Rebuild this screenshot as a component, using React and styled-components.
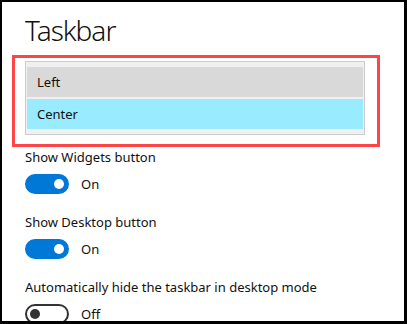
import React from 'react';
import styled, { createGlobalStyle } from 'styled-components';

const GlobalStyle = createGlobalStyle`
  html, body {
    margin: 0;
    padding: 0;
    background: #fff;
  }
  body {
    font-family: "Noto Sans", "Open Sans", sans-serif;
    color: #000;
  }
`;

const Frame = styled.div`
  width: 407px;
  height: 324px;
  box-sizing: border-box;
  border-style: solid;
  border-color: #000;
  border-width: 2px 3px 3px 2px;
  background: #fff;
  overflow: hidden;
`;

const Title = styled.h1`
  margin: 0;
  padding: 9px 0 0 23px;
  height: 53px;
  box-sizing: border-box;
  font-size: 28px;
  font-weight: 300;
  line-height: 38px;
  letter-spacing: -1px;
  color: #111;
`;

const Highlight = styled.div`
  margin-left: 10px;
  width: 368px;
  height: 92px;
  box-sizing: border-box;
  border: 3px solid #ff4447;
  padding: 3px 0 0 10px;
`;

const OptionList = styled.div`
  width: 340px;
  height: 74px;
  box-sizing: border-box;
  border: 1px solid #cccccc;
  background: #f0f0f0;
  padding: 5px 1px;
  display: flex;
  flex-direction: column;
  gap: 2px;
`;

const Option = styled.div`
  height: 30px;
  display: flex;
  align-items: center;
  padding-left: 10px;
  font-size: 13px;
  color: #111;
  background: ${(p) => (p.$selected ? '#99ebff' : '#d9d9d9')};
`;

const Settings = styled.div`
  padding-left: 23px;
  color: #111;
`;

const Setting = styled.div`
  margin-bottom: 18px;
`;

const Label = styled.div`
  height: 20px;
  line-height: 20px;
  font-size: 13px;
  margin-bottom: 7px;
`;

const ToggleRow = styled.div`
  display: flex;
  align-items: center;
  gap: 12px;
  height: 20px;
  font-size: 13px;
`;

const Track = styled.div`
  width: 44px;
  height: 20px;
  box-sizing: border-box;
  border-radius: 10px;
  border: 2px solid ${(p) => (p.$on ? '#0078d7' : '#333')};
  background: ${(p) => (p.$on ? '#0078d7' : '#fff')};
  display: flex;
  align-items: center;
  justify-content: ${(p) => (p.$on ? 'flex-end' : 'flex-start')};
  padding: 0 3px;
`;

const Knob = styled.div`
  width: 10px;
  height: 10px;
  border-radius: 50%;
  background: ${(p) => (p.$on ? '#fff' : '#333')};
`;

const settings = [
  { label: 'Show Widgets button', on: true },
  { label: 'Show Desktop button', on: true },
  { label: 'Automatically hide the taskbar in desktop mode', on: false },
];

const Toggle = ({ on }) => (
  <ToggleRow>
    <Track $on={on}>
      <Knob $on={on} />
    </Track>
    <span>{on ? 'On' : 'Off'}</span>
  </ToggleRow>
);

export default function App() {
  return (
    <>
      <GlobalStyle />
      <Frame>
        <Title>Taskbar</Title>
        <Highlight>
          <OptionList>
            <Option>Left</Option>
            <Option $selected>Center</Option>
          </OptionList>
        </Highlight>
        <Settings>
          {settings.map((s) => (
            <Setting key={s.label}>
              <Label>{s.label}</Label>
              <Toggle on={s.on} />
            </Setting>
          ))}
        </Settings>
      </Frame>
    </>
  );
}
